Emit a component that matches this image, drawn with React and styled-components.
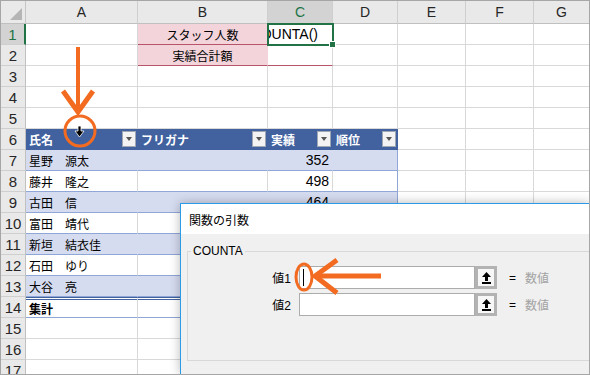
import React from "react";
import styled, { createGlobalStyle } from "styled-components";

const GlobalStyle = createGlobalStyle`
  body {
    margin: 0;
    background: #fff;
    font-family: "Liberation Sans", "Noto Sans CJK JP", sans-serif;
  }
`;

const ORANGE = "#f26b21";
const BAND = "#d6dcf0";
const TABLE_LINE = "#8fa6d6";
const TABLE_HEAD = "#41629f";
const GRID = "#d9d9d9";

const Frame = styled.div`
  position: relative;
  width: 590px;
  height: 375px;
  box-sizing: border-box;
  border: 1px solid #a6a6a6;
  overflow: hidden;
  background: #fff;
`;

const Sheet = styled.div`
  display: grid;
  grid-template-columns: 25px 112px 130px 65px 65px 68px 68px 56px;
  grid-template-rows: 23px repeat(17, 21px);
`;

const Corner = styled.div`
  position: relative;
  background: #e9e9e9;
  border-right: 1px solid #c6c6c6;
  border-bottom: 1px solid #c0c0c0;
  box-sizing: border-box;
  &::after {
    content: "";
    position: absolute;
    right: 3px;
    bottom: 3px;
    border-left: 12px solid transparent;
    border-bottom: 12px solid #b5b5b5;
  }
`;

const ColHead = styled.div`
  display: flex;
  align-items: center;
  justify-content: center;
  box-sizing: border-box;
  font-size: 14px;
  background: ${({ $active }) => ($active ? "#d3d3d3" : "#e9e9e9")};
  color: ${({ $active }) => ($active ? "#217346" : "#262626")};
  border-right: 1px solid #cfcfcf;
  border-bottom: 1px solid #c0c0c0;
`;

const RowHead = styled.div`
  display: flex;
  align-items: center;
  justify-content: center;
  box-sizing: border-box;
  font-size: 15px;
  background: ${({ $active }) => ($active ? "#d3d3d3" : "#e9e9e9")};
  color: ${({ $active }) => ($active ? "#217346" : "#262626")};
  border-bottom: 1px solid #cfcfcf;
  border-right: ${({ $active }) =>
    $active ? "2px solid #217346" : "1px solid #c0c0c0"};
`;

const Cell = styled.div`
  position: relative;
  box-sizing: border-box;
  display: flex;
  align-items: center;
  justify-content: ${({ $align }) =>
    $align === "right" ? "flex-end" : $align === "center" ? "center" : "flex-start"};
  padding: 0 3px;
  font-size: ${({ $size }) => $size || 12}px;
  font-weight: ${({ $bold }) => ($bold ? 700 : 400)};
  white-space: nowrap;
  overflow: hidden;
  color: #000;
  background: ${({ $bg }) => $bg || "#fff"};
  border-right: 1px solid ${({ $right }) => $right || GRID};
  border-bottom: 1px solid ${({ $bottom }) => $bottom || GRID};
  border-top: ${({ $total }) => ($total ? `3px double ${TABLE_HEAD}` : "none")};
`;

const HeadCell = styled(Cell)`
  justify-content: space-between;
  padding-right: 1px;
  background: ${TABLE_HEAD};
  color: #fff;
  font-weight: 700;
  border-right-color: ${TABLE_HEAD};
  border-bottom-color: ${TABLE_HEAD};
`;

const FilterBtn = styled.span`
  display: flex;
  align-items: center;
  justify-content: center;
  width: 14px;
  height: 16px;
  box-sizing: border-box;
  background: #f3f3f3;
  border: 1px solid #9fa6b4;
  &::after {
    content: "";
    border-left: 3.5px solid transparent;
    border-right: 3.5px solid transparent;
    border-top: 4px solid #555;
  }
`;

const EditCell = styled(Cell)`
  overflow: visible;
  z-index: 2;
  padding: 0;
  &::after {
    content: "";
    position: absolute;
    top: -1px;
    left: -1px;
    right: -2px;
    bottom: -2px;
    border: 2px solid #217346;
  }
  &::before {
    content: "";
    position: absolute;
    right: -4px;
    bottom: -4px;
    width: 5px;
    height: 5px;
    background: #217346;
    border: 1px solid #fff;
    z-index: 3;
  }
`;

const EditText = styled.div`
  display: flex;
  justify-content: flex-end;
  width: 100%;
  overflow: hidden;
  padding-right: 14px;
  box-sizing: border-box;
  font-size: 14px;
`;

const Dialog = styled.div`
  position: absolute;
  left: 179px;
  top: 202px;
  right: 0;
  bottom: 0;
  display: flex;
  flex-direction: column;
  background: #f0f0f0;
  border-left: 1px solid #2d9ae8;
  border-top: 1px solid #2d9ae8;
  box-shadow: 0 0 10px rgba(0, 0, 0, 0.28);
  z-index: 5;
`;

const TitleBar = styled.div`
  height: 30px;
  display: flex;
  align-items: center;
  padding-left: 8px;
  background: #fff;
  font-size: 12px;
  color: #000;
`;

const Body = styled.div`
  padding: 10px 0 0 6px;
`;

const Group = styled.fieldset`
  margin: 0;
  padding: 8px 0 40px 0;
  border: 1px solid #d8d8d8;
  border-right: none;
  min-width: 0;
`;

const Legend = styled.legend`
  padding: 0 2px;
  margin-left: 3px;
  font-size: 12px;
  color: #000;
`;

const ArgRow = styled.div`
  display: flex;
  align-items: center;
  height: 23px;
  margin-bottom: 4px;
  font-size: 12px;
`;

const ArgLabel = styled.span`
  width: 103px;
  margin-right: 8px;
  text-align: right;
`;

const InputBox = styled.div`
  position: relative;
  width: 176px;
  height: 23px;
  box-sizing: border-box;
  background: #fff;
  border: 1px solid #acacac;
`;

const Caret = styled.span`
  position: absolute;
  left: 3px;
  top: 2px;
  width: 1px;
  height: 17px;
  background: #000;
`;

const RefBtn = styled.div`
  display: flex;
  align-items: center;
  justify-content: center;
  width: 22px;
  height: 23px;
  box-sizing: border-box;
  background: #f7f7f7;
  border: 3px solid #b3b3b3;
`;

const Eq = styled.span`
  margin-left: 12px;
  width: 16px;
`;

const Hint = styled.span`
  color: #a3a3a3;
`;

const Overlay = styled.svg`
  position: absolute;
  left: -1px;
  top: -1px;
  z-index: 10;
  pointer-events: none;
`;

const people = [
  ["星野　源太", 352],
  ["藤井　隆之", 498],
  ["古田　信", 464],
  ["富田　靖代"],
  ["新垣　結衣佳"],
  ["石田　ゆり"],
  ["大谷　亮"],
];

const letters = ["A", "B", "C", "D", "E", "F", "G"];
const headers = ["氏名", "フリガナ", "実績", "順位"];

const RefIcon = () => (
  <svg width="11" height="13" viewBox="0 0 11 13">
    <path d="M5.5 1 L10 6 L7 6 L7 10 L4 10 L4 6 L1 6 Z" fill="#000" />
    <rect x="1" y="11" width="9" height="2" fill="#000" />
  </svg>
);

function renderRow(r) {
  const out = [];
  out.push(
    <RowHead key={`h${r}`} $active={r === 1}>
      {r}
    </RowHead>
  );
  const pink = "#f2d4da";
  const red = "#b85468";

  letters.forEach((c, i) => {
    const key = `${c}${r}`;
    const inTable = i < 4 && r >= 6 && r <= 14;

    if (r === 1 && c === "B") {
      out.push(
        <Cell key={key} $bg={pink} $align="center" $bottom={red} $right={pink}>
          スタッフ人数
        </Cell>
      );
    } else if (r === 2 && c === "B") {
      out.push(
        <Cell key={key} $bg={pink} $align="center" $bottom={red} $right={pink}>
          実績合計額
        </Cell>
      );
    } else if (r === 1 && c === "C") {
      out.push(
        <EditCell key={key}>
          <EditText>=COUNTA()</EditText>
        </EditCell>
      );
    } else if (r === 2 && c === "C") {
      out.push(<Cell key={key} $bottom={red} />);
    } else if (inTable && r === 6) {
      out.push(
        <HeadCell key={key} $right={i === 3 ? TABLE_LINE : TABLE_HEAD}>
          <span>{headers[i]}</span>
          <FilterBtn />
        </HeadCell>
      );
    } else if (inTable && r === 14) {
      out.push(
        <Cell
          key={key}
          $total
          $bold
          $bottom={TABLE_LINE}
          $right={i === 3 ? TABLE_LINE : GRID}
        >
          {i === 0 ? "集計" : ""}
        </Cell>
      );
    } else if (inTable) {
      const p = people[r - 7];
      const banded = r % 2 === 1;
      const bg = banded ? BAND : "#fff";
      const right = i === 3 ? TABLE_LINE : banded ? BAND : GRID;
      let content = "";
      if (i === 0) content = p[0];
      if (i === 2 && p[1]) content = p[1];
      out.push(
        <Cell
          key={key}
          $bg={bg}
          $right={right}
          $bottom={TABLE_LINE}
          $align={i === 2 ? "right" : "left"}
          $size={i === 2 ? 14 : 12}
        >
          {content}
        </Cell>
      );
    } else {
      out.push(<Cell key={key} />);
    }
  });
  return out;
}

const App = () => {
  const rows = [];
  for (let r = 1; r <= 17; r++) rows.push(...renderRow(r));

  return (
    <>
      <GlobalStyle />
      <Frame>
        <Sheet>
          <Corner />
          {letters.map((l) => (
            <ColHead key={l} $active={l === "C"}>
              {l}
            </ColHead>
          ))}
          {rows}
        </Sheet>

        <Dialog>
          <TitleBar>関数の引数</TitleBar>
          <Body>
            <Group>
              <Legend>COUNTA</Legend>
              <ArgRow>
                <ArgLabel>値1</ArgLabel>
                <InputBox>
                  <Caret />
                </InputBox>
                <RefBtn>
                  <RefIcon />
                </RefBtn>
                <Eq>=</Eq>
                <Hint>数値</Hint>
              </ArgRow>
              <ArgRow>
                <ArgLabel>値2</ArgLabel>
                <InputBox />
                <RefBtn>
                  <RefIcon />
                </RefBtn>
                <Eq>=</Eq>
                <Hint>数値</Hint>
              </ArgRow>
            </Group>
          </Body>
        </Dialog>

        <Overlay width="590" height="375" viewBox="0 0 590 375">
          <g fill="none" stroke={ORANGE}>
            <line x1="78" y1="47" x2="78" y2="110" strokeWidth="4" />
            <polyline points="63,91 78,112 93,91" strokeWidth="5" />
            <circle cx="80" cy="131" r="15" strokeWidth="3" />
            <ellipse cx="304" cy="277" rx="8" ry="13" strokeWidth="3" />
            <line x1="381" y1="276" x2="318" y2="276" strokeWidth="5" />
            <polyline points="337,260 315,276 337,293" strokeWidth="5" />
          </g>
          <path
            d="M78 126 H81 V131 H84 L79.5 137 L75 131 H78 Z"
            fill="#000"
            stroke="#fff"
            strokeWidth="0.8"
          />
        </Overlay>
      </Frame>
    </>
  );
};

export default App;
